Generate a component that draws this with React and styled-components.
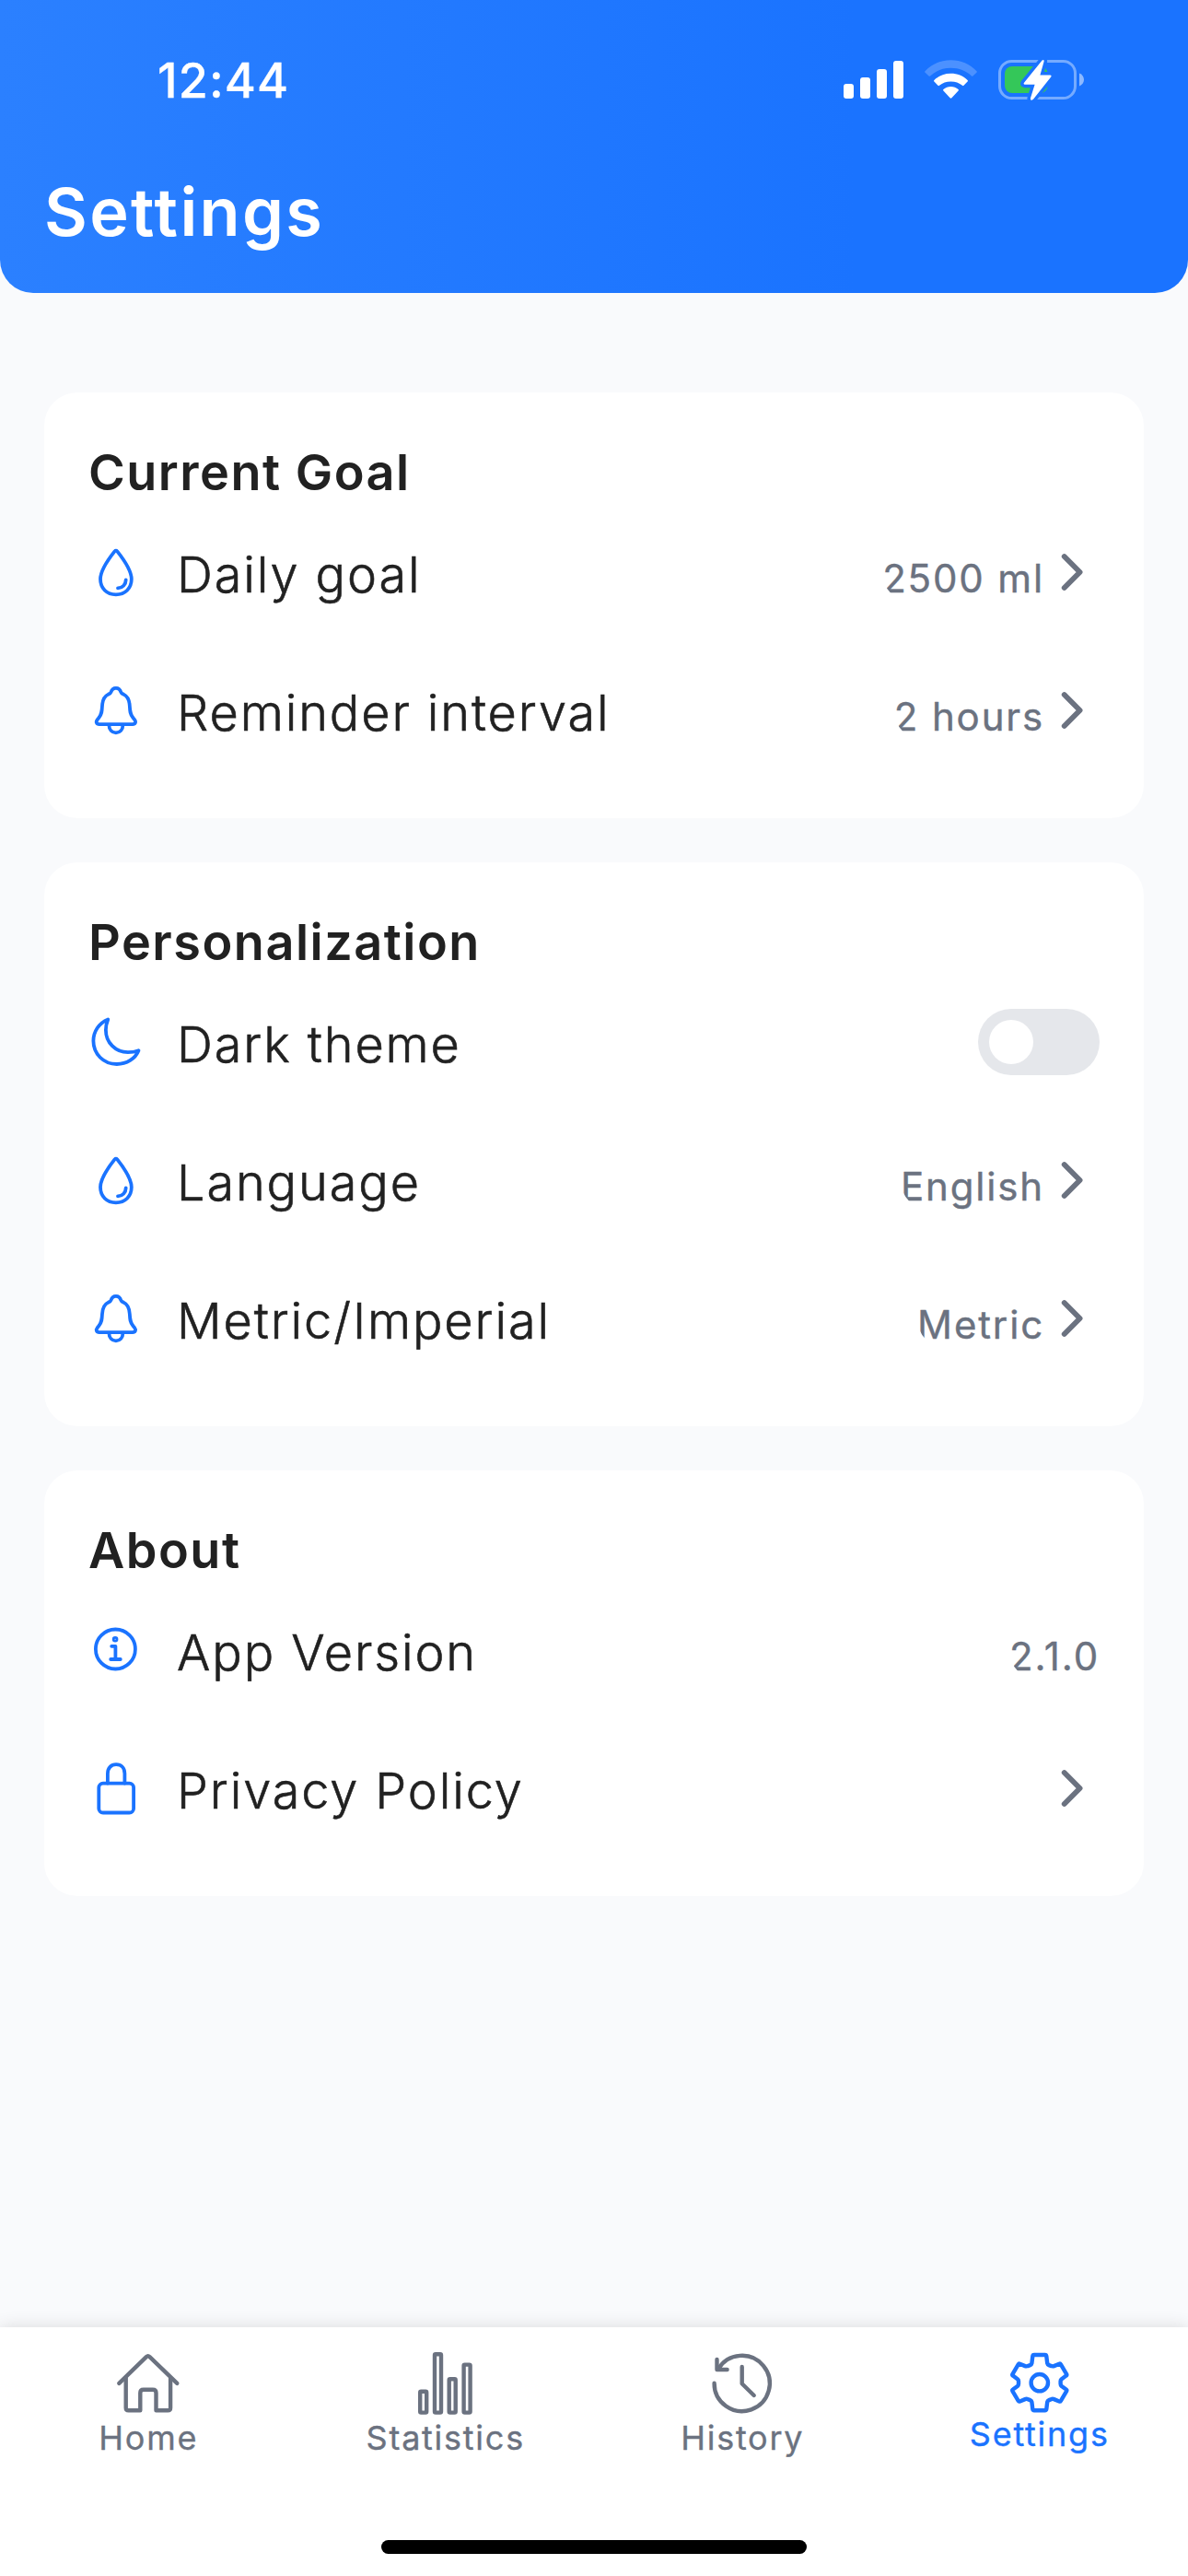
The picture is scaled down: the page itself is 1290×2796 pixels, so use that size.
import React, { useState } from "react";
import styled, { createGlobalStyle, css } from "styled-components";

const colors = {
  primary: "#1a73ff",
  primaryLight: "#2b80ff",
  background: "#f9fafc",
  surface: "#ffffff",
  text: "#212121",
  muted: "#6b7280",
  track: "#e5e7eb",
};

const GlobalStyle = createGlobalStyle`
  *, *::before, *::after { box-sizing: border-box; }
  body {
    margin: 0;
    background: ${colors.background};
    font-family: Inter, "Liberation Sans", sans-serif;
  }
  button { font: inherit; border: 0; background: none; padding: 0; }
`;

const Screen = styled.div`
  display: flex;
  flex-direction: column;
  width: 1290px;
  height: 2796px;
  overflow: hidden;
  background: ${colors.background};
`;

const Header = styled.header`
  display: flex;
  flex-direction: column;
  flex: none;
  height: 318px;
  border-radius: 0 0 36px 36px;
  background: linear-gradient(90deg, ${colors.primaryLight}, ${colors.primary} 72%);
  color: #fff;
`;

const StatusBar = styled.div`
  display: flex;
  align-items: flex-start;
  justify-content: space-between;
  height: 176px;
  padding: 56px 113px 0 171px;
`;

const Clock = styled.span`
  font-size: 52px;
  font-weight: 500;
  line-height: 64px;
  letter-spacing: 1.15px;
  -webkit-text-stroke: 0.3px currentColor;
`;

const StatusIcons = styled.div`
  display: flex;
  gap: 23px;
  padding-top: 8px;

  svg { display: block; }
`;

const PageTitle = styled.h1`
  margin: 0;
  padding: 10px 48px 0;
  font-size: 72px;
  font-weight: 600;
  line-height: 88px;
  letter-spacing: 2.35px;
`;

const Content = styled.main`
  display: flex;
  flex: 1;
  flex-direction: column;
  gap: 48px;
  padding: 108px 48px 0;
`;

const Card = styled.section`
  padding: 48px 48px 42px;
  border-radius: 36px;
  background: ${colors.surface};
`;

const CardTitle = styled.h2`
  margin: 0;
  padding-top: 3px;
  height: 72px;
  color: ${colors.text};
  font-size: 54px;
  font-weight: 600;
  line-height: 72px;
  letter-spacing: 1.5px;
`;

const Row = styled.div`
  display: grid;
  grid-template-columns: 60px 1fr auto;
  align-items: center;
  column-gap: 36px;
  height: 150px;
`;

const RowIcon = styled.svg`
  display: block;
  width: 60px;
  height: 60px;
  fill: none;
  stroke: ${colors.primary};
  stroke-width: 3.8;
  stroke-linecap: round;
  stroke-linejoin: round;
`;

const RowLabel = styled.span`
  padding-top: 5px;
  color: ${colors.text};
  font-size: 54px;
  font-weight: 300;
  line-height: 72px;
  letter-spacing: 1.9px;
  -webkit-text-stroke: 0.6px currentColor;
`;

const RowAction = styled.span`
  display: flex;
  align-items: center;
  height: 63px;
  overflow: hidden;
  border-radius: 31.5px;
  color: ${colors.muted};
`;

const RowValue = styled.span`
  padding-top: 13px;
  font-size: 42px;
  font-weight: 400;
  line-height: 50px;
  letter-spacing: 1.85px;
  -webkit-text-stroke: 0.4px currentColor;
`;

const Chevron = styled.svg`
  display: block;
  width: 60px;
  height: 60px;
  fill: none;
  stroke: currentColor;
  stroke-width: 5.8;
  stroke-linecap: round;
  stroke-linejoin: round;
`;

const Toggle = styled.button`
  display: flex;
  align-items: center;
  justify-content: ${(p) => (p.$on ? "flex-end" : "flex-start")};
  width: 132px;
  height: 72px;
  padding: 0 12px;
  border-radius: 36px;
  background: ${(p) => (p.$on ? colors.primary : colors.track)};
`;

const Knob = styled.span`
  width: 48px;
  height: 48px;
  border-radius: 50%;
  background: #fff;
`;

const TabBar = styled.nav`
  display: flex;
  flex: none;
  flex-direction: column;
  align-items: center;
  justify-content: space-between;
  height: 270px;
  padding-bottom: 24px;
  background: ${colors.surface};
  box-shadow: 0 0 18px rgba(0, 0, 0, 0.13);
`;

const Tabs = styled.div`
  display: grid;
  grid-template-columns: repeat(4, 1fr);
  width: 100%;
`;

const Tab = styled.button`
  display: flex;
  flex-direction: column;
  align-items: center;
  padding-top: 19px;
  color: ${(p) => (p.$active ? colors.primary : colors.muted)};
`;

const TabIcon = styled.svg`
  display: block;
  width: 84px;
  height: 84px;
  fill: none;
  stroke: currentColor;
  stroke-width: 4.4;
  stroke-linecap: round;
  stroke-linejoin: round;
`;

const TabLabel = styled.span`
  font-size: 36px;
  font-weight: 400;
  line-height: 44px;
  letter-spacing: 1.75px;
  -webkit-text-stroke: 0.35px currentColor;
  ${(p) =>
    p.$active
      ? css`margin-top: -9px;`
      : css`margin-top: -5px;`}
`;

const HomeIndicator = styled.div`
  width: 462px;
  height: 15px;
  border-radius: 8px;
  background: #000;
`;

const Drop = () => (
  <RowIcon viewBox="0 0 60 60">
    <path d="M28.5 7.4C20.5 17.5 13 28 13 37.6C13 47.6 20 54.4 29.9 54.4C39.8 54.4 46.8 47.6 46.8 37.6C46.8 28 39.3 17.5 31.3 7.4Q29.9 5.8 28.5 7.4Z" />
    <path d="M32 47.4C37 47.2 40.6 43.4 40.7 38.4" />
  </RowIcon>
);

const Bell = () => (
  <RowIcon viewBox="0 0 60 60">
    <path d="M29.9 5.8C27 5.8 25.3 7.6 24.5 10.2C24.1 11.6 23.2 12 21.6 12.6C17 14.8 15.3 19.5 15 25C14.7 31 14.5 34 11.5 37.8L9.7 40.2C7.8 42.7 8.8 45.1 11.8 45.1H48C51 45.1 52 42.7 50.1 40.2L48.3 37.8C45.3 34 45.1 31 44.8 25C44.5 19.5 42.8 14.8 38.2 12.6C36.6 12 35.7 11.6 35.3 10.2C34.5 7.6 32.8 5.8 29.9 5.8Z" />
    <path d="M22.4 46C22.4 51 25.6 54.3 29.9 54.3C34.2 54.3 37.4 51 37.4 46" />
  </RowIcon>
);

const Moon = () => (
  <RowIcon viewBox="0 0 60 60">
    <path d="M21.3 5.4C11.5 9.3 5.4 18.8 5.4 28.8C5.4 43 16.5 54 30.8 54C41.5 54 51 48 54.5 39.2C50 40.9 47 41.2 42.9 41.2C29.4 41.2 18.9 30.6 18.9 17C18.9 12.5 19.8 8.9 21.3 5.4Z" />
  </RowIcon>
);

const Info = () => (
  <RowIcon viewBox="0 0 60 60">
    <circle cx="29.4" cy="29" r="21.5" />
    <circle cx="29.1" cy="18.2" r="1.4" />
    <path d="M25.2 25.8H29.4V40M24.2 40H34.8" />
  </RowIcon>
);

const Lock = () => (
  <RowIcon viewBox="0 0 60 60">
    <rect x="11.3" y="24.7" width="37.8" height="31.8" rx="4.6" />
    <path d="M20.9 24.5V14C20.9 8 24.6 4.2 30.1 4.2C35.6 4.2 39.4 8 39.4 14V24.5" />
  </RowIcon>
);

const HomeIcon = () => (
  <TabIcon viewBox="0 0 84 84">
    <path d="M10.3 41.9L39.9 13.1Q41.7 11.4 43.5 13.1L73.3 41.9" />
    <path d="M17.7 36V68.4Q17.7 71.3 20.6 71.3H33.3V52.2Q33.3 48.7 36.8 48.7H47Q50.5 48.7 50.5 52.2V71.3H63.2Q66.1 71.3 66.1 68.4V36" />
  </TabIcon>
);

const StatsIcon = () => (
  <TabIcon viewBox="0 0 84 84">
    <rect x="14.2" y="50.8" width="7" height="22.8" rx="1" />
    <rect x="30" y="10.2" width="7" height="63.4" rx="1" />
    <rect x="45.7" y="37.2" width="7" height="36.4" rx="1" />
    <rect x="61.6" y="21.6" width="7" height="52" rx="1" />
  </TabIcon>
);

const HistoryIcon = () => (
  <TabIcon viewBox="0 0 84 84">
    <path d="M11.6 41.7A30.1 30.1 0 1 0 15.8 26.6" />
    <path d="M14.5 16V27H25.6" />
    <path d="M41.7 24V42.2L54.7 55" />
  </TabIcon>
);

const GearIcon = () => (
  <TabIcon viewBox="0 0 84 84">
    <path d="M36 11H47.6Q49.1 11 49.3 12.5L50.2 20Q50.5 21.5 52 22.1L54.6 23.1Q56 23.7 57.5 23.1L63.2 20.7Q64.3 20.3 64.9 21.3L71.1 31.8Q71.7 32.9 70.7 33.6L65.8 37.2Q64.6 38.2 64.6 39.6V42.6Q64.6 44 65.8 45L70.7 48.6Q71.7 49.3 71.1 50.4L64.9 60.9Q64.3 61.9 63.2 61.5L57.5 59.1Q56 58.5 54.6 59.1L52 60.1Q50.5 60.7 50.2 62.2L49.3 69.7Q49.1 71.2 47.6 71.2H36Q34.5 71.2 34.3 69.7L33.4 62.2Q33.1 60.7 31.6 60.1L29 59.1Q27.6 58.5 26.1 59.1L20.4 61.5Q19.3 61.9 18.7 60.9L12.5 50.4Q11.9 49.3 12.9 48.6L17.8 45Q19 44 19 42.6V39.6Q19 38.2 17.8 37.2L12.9 33.6Q11.9 32.9 12.5 31.8L18.7 21.3Q19.3 20.3 20.4 20.7L26.1 23.1Q27.6 23.7 29 23.1L31.6 22.1Q33.1 21.5 33.4 20L34.3 12.5Q34.5 11 36 11Z" />
    <circle cx="41.8" cy="41.2" r="9.2" />
  </TabIcon>
);

const SignalIcon = () => (
  <svg width="65" height="46" viewBox="0 0 65 46" fill="#fff">
    <rect x="0" y="27" width="11" height="16" rx="3" />
    <rect x="18" y="20" width="11" height="23" rx="3" />
    <rect x="36" y="11" width="11" height="32" rx="3" />
    <rect x="54" y="2" width="11" height="41" rx="3" />
  </svg>
);

const WifiIcon = () => (
  <svg width="57" height="46" viewBox="0 0 57 46" fill="#fff">
    <path
      opacity="0.22"
      d="M0.5 13.2C8 5.4 17.6 1.2 28.5 1.2C39.4 1.2 49 5.4 56.5 13.2Q57.2 14 56.4 14.8L52.4 18.5Q51.7 19.2 50.9 18.4C44.9 12.8 37.4 9.8 28.5 9.8C19.6 9.8 12.1 12.8 6.1 18.4Q5.3 19.2 4.6 18.5L0.6 14.8Q-0.2 14 0.5 13.2Z"
    />
    <path d="M10.4 23C15.4 18.2 21.5 15.8 28.5 15.8C35.5 15.8 41.6 18.2 46.6 23Q47.4 23.8 46.6 24.6L42.5 28.8Q41.8 29.5 41 28.8C37.5 25.9 33.4 24.4 28.5 24.4C23.6 24.4 19.5 25.9 16 28.8Q15.2 29.5 14.5 28.8L10.4 24.6Q9.6 23.8 10.4 23Z" />
    <path d="M20.4 33C22.8 30.9 25.4 29.9 28.5 29.9C31.6 29.9 34.2 30.9 36.6 33Q37.4 33.8 36.6 34.6L29.4 42.3Q28.5 43.2 27.6 42.3L20.4 34.6Q19.6 33.8 20.4 33Z" />
  </svg>
);

const boltPath =
  "M47.6 1.6Q49.9 -0.3 49.6 2.8L45.4 17.4H56Q58.4 17.6 57.2 19.4L38 43.7Q34.8 46.2 34.9 42.8L39.6 27.8H29Q26.6 27.5 28.2 25.4Z";

const BatteryIcon = () => (
  <svg width="93" height="46" viewBox="0 0 93 46">
    <defs>
      <mask id="boltGap">
        <rect width="93" height="46" fill="#fff" />
        <path d={boltPath} fill="#000" stroke="#000" strokeWidth="7" strokeLinejoin="round" />
      </mask>
    </defs>
    <g mask="url(#boltGap)">
      <rect x="1.5" y="2.5" width="82" height="40" rx="13" fill="none" stroke="#fff" strokeOpacity="0.4" strokeWidth="3" />
      <rect x="7" y="8" width="46.5" height="29" rx="8" fill="#34c759" />
    </g>
    <path d="M88 15.6C91 16.6 93 19.4 93 22.5C93 25.6 91 28.4 88 29.4Z" fill="#fff" fillOpacity="0.5" />
    <path d={boltPath} fill="#fff" />
  </svg>
);

function Disclosure({ value }) {
  return (
    <RowAction>
      {value && <RowValue>{value}</RowValue>}
      <Chevron viewBox="0 0 60 60">
        <path d="M21.7 13L38.6 30L21.7 47" />
      </Chevron>
    </RowAction>
  );
}

function SettingRow({ icon: Icon, label, children }) {
  return (
    <Row>
      <Icon />
      <RowLabel>{label}</RowLabel>
      {children}
    </Row>
  );
}

const tabs = [
  { label: "Home", icon: HomeIcon },
  { label: "Statistics", icon: StatsIcon },
  { label: "History", icon: HistoryIcon },
  { label: "Settings", icon: GearIcon },
];

export default function App() {
  const [dark, setDark] = useState(false);
  const [current, setCurrent] = useState("Settings");

  return (
    <Screen>
      <GlobalStyle />
      <Header>
        <StatusBar>
          <Clock>12:44</Clock>
          <StatusIcons>
            <SignalIcon />
            <WifiIcon />
            <BatteryIcon />
          </StatusIcons>
        </StatusBar>
        <PageTitle>Settings</PageTitle>
      </Header>

      <Content>
        <Card>
          <CardTitle>Current Goal</CardTitle>
          <SettingRow icon={Drop} label="Daily goal">
            <Disclosure value="2500 ml" />
          </SettingRow>
          <SettingRow icon={Bell} label="Reminder interval">
            <Disclosure value="2 hours" />
          </SettingRow>
        </Card>

        <Card>
          <CardTitle>Personalization</CardTitle>
          <SettingRow icon={Moon} label="Dark theme">
            <Toggle
              $on={dark}
              role="switch"
              aria-checked={dark}
              onClick={() => setDark(!dark)}
            >
              <Knob />
            </Toggle>
          </SettingRow>
          <SettingRow icon={Drop} label="Language">
            <Disclosure value="English" />
          </SettingRow>
          <SettingRow icon={Bell} label="Metric/Imperial">
            <Disclosure value="Metric" />
          </SettingRow>
        </Card>

        <Card>
          <CardTitle>About</CardTitle>
          <SettingRow icon={Info} label="App Version">
            <RowAction>
              <RowValue>2.1.0</RowValue>
            </RowAction>
          </SettingRow>
          <SettingRow icon={Lock} label="Privacy Policy">
            <Disclosure />
          </SettingRow>
        </Card>
      </Content>

      <TabBar>
        <Tabs>
          {tabs.map(({ label, icon: Icon }) => (
            <Tab
              key={label}
              $active={label === current}
              onClick={() => setCurrent(label)}
            >
              <Icon />
              <TabLabel $active={label === current}>{label}</TabLabel>
            </Tab>
          ))}
        </Tabs>
        <HomeIndicator />
      </TabBar>
    </Screen>
  );
}
